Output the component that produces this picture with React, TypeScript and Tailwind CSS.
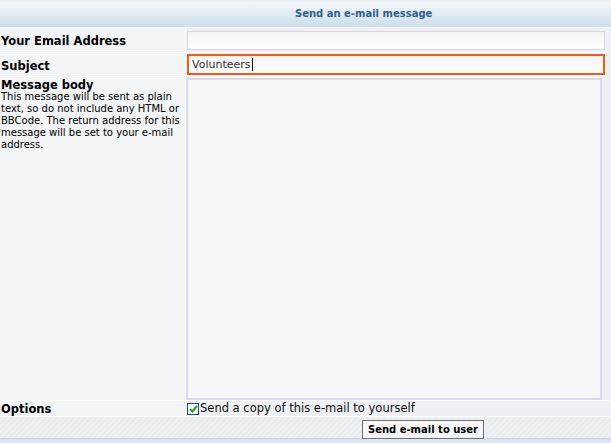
import React from "react";

const font = "font-['DejaVu_Sans',Verdana,sans-serif]";

export default function App() {
  return (
    <div className={`w-[611px] h-[443px] bg-white ${font} text-black overflow-hidden flex flex-col`}>
      {/* Header */}
      <div className="h-[28px] border-b border-white flex">
        <div className="flex-1 border-t-2 border-[#e9eff5] bg-gradient-to-b from-[#f3f6f9] to-[#cddeea] flex items-center pl-[295px]">
          <span className="text-[10px] font-bold text-[#2f6190] leading-none mt-[-1px]">Send an e-mail message</span>
        </div>
      </div>

      {/* Row 1 */}
      <div className="h-[25px] flex border-b border-white">
        <div className="w-[186px] bg-[#f3f4f6] border-r border-white flex items-center pl-[1px]">
          <span className="text-[11.5px] font-bold leading-none mt-[3px]">Your Email Address</span>
        </div>
        <div className="flex-1 bg-[#eff0f5] flex items-start pt-[3px] pl-[1px] pr-[6px]">
          <div className="h-[19px] w-full border border-[#d9d6ea] bg-gradient-to-b from-[#f5f5f5] to-white" />
        </div>
      </div>

      {/* Row 2 */}
      <div className="h-[24px] flex border-b border-white">
        <div className="w-[186px] bg-[#f3f4f6] border-r border-white flex items-center pl-[1px]">
          <span className="text-[11.5px] font-bold leading-none mt-[4px]">Subject</span>
        </div>
        <div className="flex-1 bg-[#eff0f5] flex items-start pt-[1px] pl-[1px] pr-[6px]">
          <div className="h-[21px] w-full border-2 border-[#f55a13] bg-gradient-to-b from-[#f5f5f5] to-white flex items-center pl-[3px]">
            <span className="text-[11px] text-[#333] leading-none">Volunteers</span>
            <span className="inline-block w-[1px] h-[13px] bg-black ml-[1px]" />
          </div>
        </div>
      </div>

      {/* Row 3: message body */}
      <div className="h-[324px] flex border-b border-white">
        <div className="w-[186px] bg-[#f3f4f6] border-r border-white pl-[1px] pt-[2px]">
          <div className="text-[11.5px] font-bold leading-[12px]">Message body</div>
          <div className="text-[10px] leading-[12px] pr-[4px]">
            This message will be sent as plain text, so do not include any HTML or BBCode. The return address for this message will be set to your e-mail address.
          </div>
        </div>
        <div className="flex-1 bg-[#eff0f5] pt-[1px] pr-[9px]">
          <div className="h-[322px] w-full border-2 border-[#dcd9ec] bg-[#f7f7f7]" />
        </div>
      </div>

      {/* Options */}
      <div className="h-[16px] flex border-b border-white">
        <div className="w-[186px] bg-[#f3f4f6] border-r border-white flex items-center pl-[1px]">
          <span className="text-[11.5px] font-bold leading-none mt-[2px]">Options</span>
        </div>
        <div className="flex-1 bg-[#eff0f5] flex items-center pl-[1px]">
          <span className="w-[12px] h-[12px] border border-[#1c4f7c] bg-white flex items-center justify-center">
            <svg width="9" height="8" viewBox="0 0 9 8">
              <path d="M1 4 L3.5 6.5 L8 1" stroke="#22a022" strokeWidth="2" fill="none" />
            </svg>
          </span>
          <span className="text-[11.5px] leading-none ml-[1px] mt-[1px] text-[#111]">Send a copy of this e-mail to yourself</span>
        </div>
      </div>

      {/* Footer */}
      <div className="h-[22px] border-b border-[#c8d3dc] flex items-start justify-center bg-[repeating-linear-gradient(135deg,#e9edf0_0px,#e9edf0_2px,#eef1f3_2px,#eef1f3_4px)]">
        <button className="ml-[235px] mt-[3px] h-[19px] px-[5px] border border-[#6f6f6f] bg-[#f6f6f6] text-[10px] font-bold leading-none">
          Send e-mail to user
        </button>
      </div>
      <div className="flex-1 bg-[#dce8f1]" />
    </div>
  );
}
